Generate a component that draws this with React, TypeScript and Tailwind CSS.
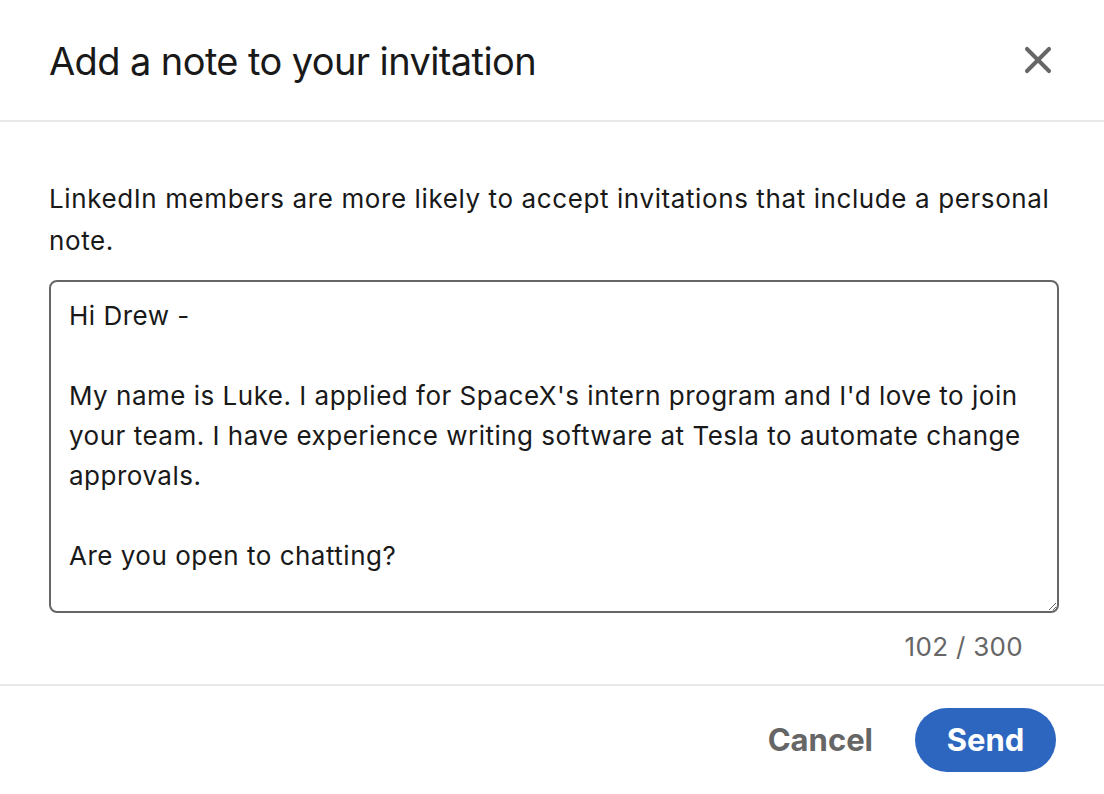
import { X } from "lucide-react";

const note = `Hi Drew -

My name is Luke. I applied for SpaceX's intern program and I'd love to join your team. I have experience writing software at Tesla to automate change approvals.

Are you open to chatting?`;

const App = () => {
  return (
    <div
      className="w-[1104px] h-[794px] bg-white flex flex-col text-[#191919]"
      style={{ fontFamily: "Inter, 'Liberation Sans', sans-serif" }}
    >
      <header className="h-[122px] flex items-center justify-between pl-[49px] pr-[44px] border-b-2 border-[#e8e8e8]">
        <h2 className="text-[38px] tracking-[-0.6px] leading-none pt-[2px]">
          Add a note to your invitation
        </h2>
        <button className="text-[#666666]">
          <X size={44} strokeWidth={2.2} />
        </button>
      </header>

      <div className="flex flex-col pr-[45px] pl-[49px] pt-[56px]">
        <p className="text-[26px] leading-[42px] tracking-[0.6px]">
          LinkedIn members are more likely to accept invitations that include a
          personal note.
        </p>
        <textarea
          className="mt-[18px] h-[333px] border-2 border-[#666666] rounded-[8px] px-[18px] pt-[14px] pb-[10px] text-[26px] leading-[40px] tracking-[0.5px] text-[#191919] resize-y outline-none"
          defaultValue={note}
        />
        <div className="self-end mr-[36px] mt-[14px] text-[26px] tracking-[0.3px] text-[#666666]">
          102 / 300
        </div>
      </div>

      <footer className="mt-[18px] border-t-2 border-[#e8e8e8] flex justify-end items-center gap-[42px] pr-[48px] pt-[22px]">
        <button className="text-[31px] font-bold text-[#666666]">Cancel</button>
        <button className="h-[64px] w-[141px] rounded-full bg-[#2d66bf] text-white text-[31px] font-bold">
          Send
        </button>
      </footer>
    </div>
  );
};

export default App;
